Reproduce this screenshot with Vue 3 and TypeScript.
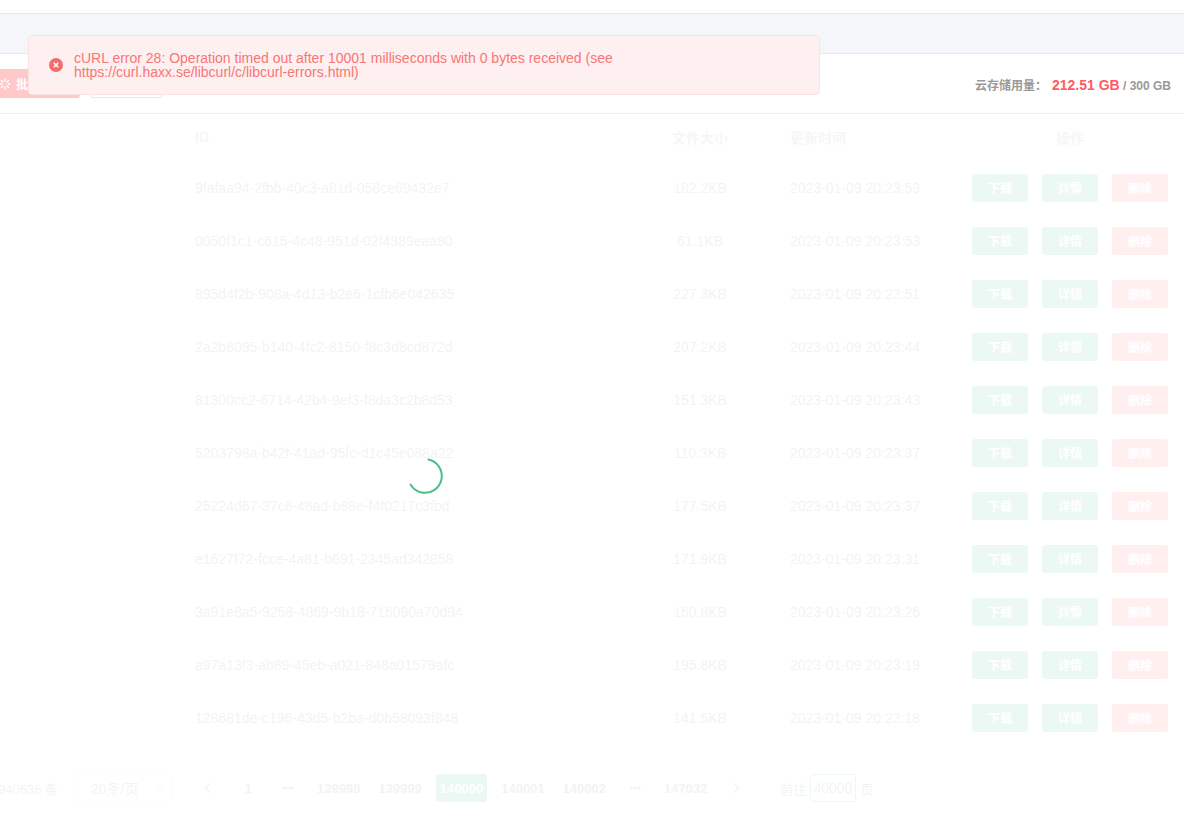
<script setup lang="ts">
interface FileRow {
  id: string
  size: string
  time: string
}

const rows: FileRow[] = [
  { id: '9fafaa94-2fbb-40c3-a81d-058ce69432e7', size: '182.2KB', time: '2023-01-09 20:23:59' },
  { id: '0050f1c1-c615-4c48-951d-02f4389eaa80', size: '61.1KB', time: '2023-01-09 20:23:53' },
  { id: '895d4f2b-908a-4d13-b2e6-1cfb6e042635', size: '227.3KB', time: '2023-01-09 20:23:51' },
  { id: '2a2b8095-b140-4fc2-8150-f8c3d8cd872d', size: '207.2KB', time: '2023-01-09 20:23:44' },
  { id: '81300cc2-6714-42b4-9ef3-f8da3c2b8d53', size: '151.3KB', time: '2023-01-09 20:23:43' },
  { id: '5203798a-b42f-41ad-95fc-d1c45e088a22', size: '110.3KB', time: '2023-01-09 20:23:37' },
  { id: '25224d67-37c8-48ad-b88e-f4f0217c3fbd', size: '177.5KB', time: '2023-01-09 20:23:37' },
  { id: 'e1627f72-fcce-4a81-b691-2345ad342858', size: '171.9KB', time: '2023-01-09 20:23:31' },
  { id: '3a91e8a5-9258-4869-9b18-716090a70d94', size: '160.8KB', time: '2023-01-09 20:23:26' },
  { id: 'a97a13f3-ab89-45eb-a021-848a01579afc', size: '195.8KB', time: '2023-01-09 20:23:19' },
  { id: '128681de-c196-43d5-b2ba-d0b58093f848', size: '141.5KB', time: '2023-01-09 20:23:18' }
]

const spokes: number[] = [0, 45, 90, 135, 180, 225, 270, 315]
</script>

<template>
  <div class="page">
    <div class="topbar"></div>
    <div class="band"></div>

    <div class="toolbar">
      <div class="actions">
        <button class="batch" type="button">
          <svg class="batch-icon" width="12" height="12" viewBox="0 0 12 12">
            <line
              v-for="a in spokes"
              :key="a"
              x1="6"
              y1="0.6"
              x2="6"
              y2="3.4"
              stroke="#fff"
              stroke-width="1.5"
              :transform="`rotate(${a} 6 6)`"
            />
          </svg>
          批量删除
        </button>
        <button class="plain" type="button"></button>
      </div>
      <div class="usage">
        云存储用量：<b class="used">212.51 GB</b><span class="quota"> / 300 GB</span>
      </div>
    </div>

    <div class="content">
      <div class="row head">
        <div>ID</div>
        <div class="center">文件大小</div>
        <div class="time">更新时间</div>
        <div class="center">操作</div>
      </div>
      <div v-for="r in rows" :key="r.id" class="row">
        <div>{{ r.id }}</div>
        <div class="center">{{ r.size }}</div>
        <div class="time">{{ r.time }}</div>
        <div class="ops">
          <span class="op green">下载</span>
          <span class="op green">详情</span>
          <span class="op red">删除</span>
        </div>
      </div>

      <div class="pager">
        <span class="total">共 940636 条</span>
        <div class="select">
          <span>20条/页</span>
          <svg width="10" height="6" viewBox="0 0 10 6">
            <path d="M1 1l4 4 4-4" fill="none" stroke="#c0c4cc" stroke-width="1.2" />
          </svg>
        </div>
        <span class="pg small first">
          <svg width="8" height="12" viewBox="0 0 8 12">
            <path d="M6.5 1L1.5 6l5 5" fill="none" stroke="#909399" stroke-width="1.5" />
          </svg>
        </span>
        <span class="pg small">1</span>
        <span class="pg small">
          <svg width="12" height="4" viewBox="0 0 12 4">
            <circle cx="2" cy="2" r="1.6" fill="#7d8086" />
            <circle cx="6" cy="2" r="1.6" fill="#7d8086" />
            <circle cx="10" cy="2" r="1.6" fill="#7d8086" />
          </svg>
        </span>
        <span class="pg">139998</span>
        <span class="pg">139999</span>
        <span class="pg active">140000</span>
        <span class="pg">140001</span>
        <span class="pg">140002</span>
        <span class="pg small">
          <svg width="12" height="4" viewBox="0 0 12 4">
            <circle cx="2" cy="2" r="1.6" fill="#7d8086" />
            <circle cx="6" cy="2" r="1.6" fill="#7d8086" />
            <circle cx="10" cy="2" r="1.6" fill="#7d8086" />
          </svg>
        </span>
        <span class="pg">147032</span>
        <span class="pg small">
          <svg width="8" height="12" viewBox="0 0 8 12">
            <path d="M1.5 1l5 5-5 5" fill="none" stroke="#909399" stroke-width="1.5" />
          </svg>
        </span>
        <div class="jump">
          <span>前往</span>
          <div class="jump-input"><div class="jump-value"><span>40000</span></div></div>
          <span>页</span>
        </div>
      </div>

      <div class="mask">
        <svg class="spinner" width="42" height="42" viewBox="0 0 42 42">
          <circle
            cx="21"
            cy="21"
            r="16.8"
            fill="none"
            stroke="#4ac08a"
            stroke-width="2"
            stroke-linecap="round"
            stroke-dasharray="66.3 105.6"
            transform="rotate(-78 21 21)"
          />
        </svg>
      </div>
    </div>

    <div class="message">
      <svg class="message-icon" width="14" height="14" viewBox="0 0 14 14">
        <circle cx="7" cy="7" r="7" fill="#f56c6c" />
        <path d="M4.8 4.8l4.4 4.4M9.2 4.8l-4.4 4.4" stroke="#fff" stroke-width="1.6" />
      </svg>
      <p class="message-text">cURL error 28: Operation timed out after 10001 milliseconds with 0 bytes received (see https://curl.haxx.se/libcurl/c/libcurl-errors.html)</p>
    </div>
  </div>
</template>

<style>
html,
body {
  margin: 0;
  background: #fff;
  overflow: hidden;
}
</style>

<style scoped>
.page {
  position: relative;
  width: 1184px;
  height: 829px;
  overflow: hidden;
  background: #fff;
  font-family: "Liberation Sans", "Noto Sans CJK SC", sans-serif;
  font-size: 14px;
  color: #7d8086;
}
.topbar {
  height: 14px;
  box-sizing: border-box;
  border-bottom: 1px solid #e8e8e8;
}
.band {
  height: 40px;
  box-sizing: border-box;
  background: #f5f6fa;
  border-bottom: 1px solid #e6e6ee;
}
.toolbar {
  height: 60px;
  box-sizing: border-box;
  border-bottom: 1px solid #eee;
  padding: 15px 13px 0 0;
  display: flex;
  justify-content: space-between;
  align-items: flex-start;
}
.actions {
  display: flex;
  gap: 10px;
  margin-left: -16px;
}
.batch {
  width: 96px;
  height: 29px;
  box-sizing: border-box;
  padding: 0 0 0 15px;
  border: none;
  border-radius: 3px;
  background: #ffc9ca;
  color: #fff;
  font: bold 12px "Liberation Sans", "Noto Sans CJK SC", sans-serif;
  display: flex;
  align-items: center;
  gap: 5px;
}
.batch-icon {
  flex: none;
}
.plain {
  width: 72px;
  height: 29px;
  box-sizing: border-box;
  border: 1px solid #e4e7ed;
  border-radius: 3px;
  background: #fff;
  padding: 0;
}
.usage {
  margin-top: 6px;
  line-height: 20px;
  font-size: 12px;
  font-weight: bold;
  color: #999;
}
.used {
  margin-left: 5px;
  font-size: 14px;
  color: #ff5a5f;
}
.content {
  position: relative;
  height: 715px;
}
.row {
  height: 53px;
  box-sizing: border-box;
  padding-left: 195px;
  border-bottom: 1px solid #ebeef5;
  display: grid;
  grid-template-columns: 445px 120px 200px 220px;
  align-items: center;
}
.head {
  height: 48px;
  padding-bottom: 2px;
  font-weight: bold;
  color: #a0a3a8;
}
.center {
  text-align: center;
}
.time {
  padding-left: 30px;
}
.ops {
  display: flex;
  justify-content: center;
  gap: 14px;
}
.op {
  width: 56px;
  height: 28px;
  box-sizing: border-box;
  padding-bottom: 1px;
  border-radius: 3px;
  color: #fff;
  font-size: 12px;
  font-weight: bold;
  display: flex;
  align-items: center;
  justify-content: center;
}
.green {
  background: #42b983;
}
.red {
  background: #ff5a5f;
}
.pager {
  margin: 29px 0 0 -18.6px;
  height: 28px;
  display: flex;
  align-items: center;
}
.total {
  font-size: 13px;
  white-space: pre;
  margin-right: 15px;
}
.select {
  width: 99px;
  height: 28px;
  box-sizing: border-box;
  border: 1px solid #dcdfe6;
  border-radius: 3px;
  padding: 0 6px 0 17px;
  display: flex;
  align-items: center;
  justify-content: space-between;
}
.pg {
  height: 28px;
  box-sizing: border-box;
  padding: 0 4px;
  margin: 0 5px;
  border-radius: 2px;
  background: #f8f8f9;
  font-size: 13px;
  font-weight: bold;
  display: flex;
  align-items: center;
  justify-content: center;
}
.small {
  width: 28px;
  margin: 0 6px;
}
.first {
  margin-left: 22px;
}
.active {
  background: #42b983;
  color: #fff;
}
.jump {
  margin-left: 24px;
  display: flex;
  align-items: center;
  gap: 4px;
  font-size: 13px;
}
.jump-input {
  width: 46px;
  height: 28px;
  box-sizing: border-box;
  border: 1px solid #42b983;
  border-radius: 3px;
  padding: 0 3px;
  display: flex;
  align-items: center;
  font-size: 14px;
}
.jump-value {
  width: 100%;
  overflow: hidden;
  display: flex;
  justify-content: flex-end;
}
.mask {
  position: absolute;
  inset: 0;
  background: rgba(255, 255, 255, 0.9);
}
.spinner {
  position: absolute;
  left: 403.5px;
  top: 340.5px;
}
.message {
  position: absolute;
  left: 28px;
  top: 35px;
  width: 792px;
  box-sizing: border-box;
  padding: 15px 15px 15px 20px;
  background: #fef0f0;
  border: 1px solid #fde2e2;
  border-radius: 4px;
  display: flex;
  align-items: center;
}
.message-icon {
  flex: none;
  margin-right: 11px;
}
.message-text {
  margin: 0;
  font-size: 14px;
  line-height: 14px;
  color: #f77676;
}
</style>
